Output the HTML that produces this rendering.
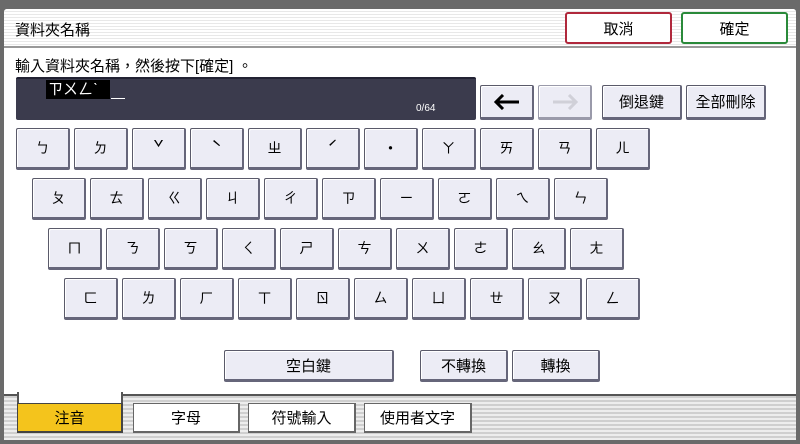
<!DOCTYPE html>
<html><head><meta charset="utf-8"><style>
*{margin:0;padding:0;box-sizing:border-box}
body{width:800px;height:444px;background:#6a6a6a;position:relative;overflow:hidden;font-family:"Liberation Sans","Noto Sans CJK TC",sans-serif;font-size:14px;color:#000}
.abs{position:absolute}
.win{left:4px;top:9px;width:792px;height:431px;background:#fff;border-radius:3px 3px 0 0}
.title{left:4px;top:9px;width:792px;height:39px;background:repeating-linear-gradient(#fff 0 2px,#e8e8e8 2px 3px);border-bottom:2px solid #999;border-radius:3px 3px 0 0}
.k{position:absolute;background:#ececf5;border:1px solid #5a5a6a;border-bottom:3px solid #66667a;border-right:2px solid #66667a;border-radius:2px;display:flex;align-items:center;justify-content:center;font-size:14px;box-shadow:inset 1px 1px 0 #fff}
.tb{position:absolute;background:#fff;border-radius:3px;display:flex;align-items:center;justify-content:center;font-size:15px}
.bot{left:4px;top:394px;width:792px;height:46px;background:repeating-linear-gradient(#cfcfcf 0 2px,#ededed 2px 4px);border-top:2px solid #555}
.tab{position:absolute;top:403px;height:30px;background:#fff;border:1px solid #666;border-bottom:2px solid #666;border-right:2px solid #666;display:flex;align-items:center;justify-content:center;font-size:15px}
.tone{font-family:"Noto Sans CJK TC",sans-serif;font-size:18px}
</style></head><body>
<div class="abs win"></div>
<div class="abs title"></div>
<div class="abs" style="left:15px;top:19px;font-size:15px">資料夾名稱</div>
<div class="tb" style="left:565px;top:12px;width:107px;height:32px;border:2px solid #b0283c">取消</div>
<div class="tb" style="left:681px;top:12px;width:107px;height:32px;border:2px solid #2a8a3a">確定</div>
<div class="abs" style="left:15px;top:55px;font-size:15px">輸入資料夾名稱，然後按下[確定] 。</div>
<div class="abs" style="left:16px;top:77px;width:460px;height:43px;background:#3b3b4d;border-radius:2px;border-top:2px solid #222233"></div>
<div class="abs" style="left:46px;top:80px;width:64px;height:19px;background:#000;color:#fff;font-size:15px;line-height:19px;padding-left:2px">ㄗㄨㄥˋ</div>
<div class="abs" style="left:111px;top:98px;width:14px;height:1px;background:#fff"></div>
<div class="abs" style="left:416px;top:103px;color:#fff;font-size:10px">0/64</div>
<div class="k" style="left:480px;top:85px;width:54px;height:35px"><svg width="28" height="16" viewBox="0 0 28 16"><path d="M26 8H3M10 1L3 8l7 7" stroke="#000" stroke-width="3" fill="none"/></svg></div>
<div class="k" style="left:538px;top:85px;width:54px;height:35px;border-color:#9a9aaa"><svg width="28" height="16" viewBox="0 0 28 16"><path d="M2 8h23M18 1l7 7-7 7" stroke="#d0d0d8" stroke-width="3" fill="none"/></svg></div>
<div class="k" style="left:602px;top:85px;width:80px;height:35px;font-size:15px">倒退鍵</div>
<div class="k" style="left:686px;top:85px;width:80px;height:35px;font-size:15px">全部刪除</div>
<div id="keys"></div>
<div class="k" style="left:224px;top:350px;width:170px;height:32px;font-size:15px">空白鍵</div>
<div class="k" style="left:420px;top:350px;width:88px;height:32px;font-size:15px">不轉換</div>
<div class="k" style="left:512px;top:350px;width:88px;height:32px;font-size:15px">轉換</div>
<div class="abs bot"></div>
<div class="abs" style="left:17px;top:392px;width:106px;height:12px;background:#fff;border-left:2px solid #555;border-right:2px solid #555"></div>
<div class="tab" style="left:17px;width:106px;background:#f4c41c;border-color:#444">注音</div>
<div class="tab" style="left:133px;width:107px">字母</div>
<div class="tab" style="left:248px;width:108px">符號輸入</div>
<div class="tab" style="left:364px;width:108px">使用者文字</div>
<script>
var rows=[["ㄅ","ㄉ","ˇ","ˋ","ㄓ","ˊ","˙","ㄚ","ㄞ","ㄢ","ㄦ"],["ㄆ","ㄊ","ㄍ","ㄐ","ㄔ","ㄗ","ㄧ","ㄛ","ㄟ","ㄣ"],["ㄇ","ㄋ","ㄎ","ㄑ","ㄕ","ㄘ","ㄨ","ㄜ","ㄠ","ㄤ"],["ㄈ","ㄌ","ㄏ","ㄒ","ㄖ","ㄙ","ㄩ","ㄝ","ㄡ","ㄥ"]];
var tones="ˇˋˊ˙";
var h="";rows.forEach(function(r,i){r.forEach(function(c,j){var t=tones.indexOf(c)>=0?'<span class="tone">'+c+'</span>':c;h+='<div class="k" style="left:'+(16+16*i+58*j)+'px;top:'+(128+50*i)+'px;width:54px;height:42px">'+t+'</div>';});});
document.getElementById("keys").innerHTML=h;
</script>
</body></html>
